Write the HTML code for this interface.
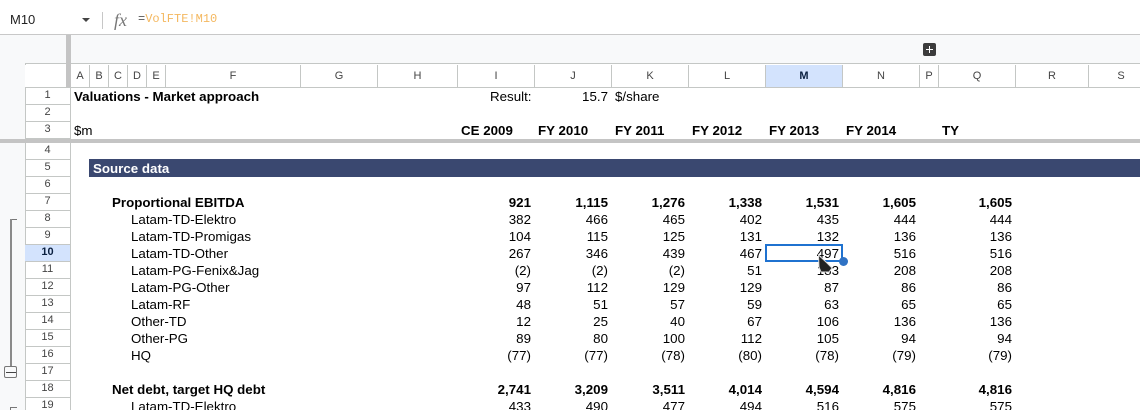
<!DOCTYPE html>
<html><head><meta charset="utf-8">
<style>
html,body{margin:0;padding:0;background:#fff}
#p{position:relative;width:1140px;height:410px;overflow:hidden;background:#fff;font-family:"Liberation Sans",sans-serif;font-size:13.33px;color:#000}
#p div{position:absolute;white-space:nowrap}
.ch{top:65px;height:22px;line-height:22px;text-align:center;font-size:11px;color:#444;border-right:1px solid #c4c7c5;box-sizing:border-box}
.rh{left:25px;width:45px;height:17px;line-height:15px;text-align:center;font-size:11px;color:#444;border-bottom:1px solid #c4c7c5;box-sizing:border-box}
.t{height:17px;line-height:17px}
.b{font-weight:bold}
.r{text-align:right;width:70px}
</style></head><body><div id="p">
<div style="left:0;top:0;width:1140px;height:34px;background:#fff"></div>
<div style="left:10px;top:11px;font-size:13px;line-height:17px;color:#222">M10</div>
<div style="left:82px;top:18px;width:0;height:0;border-left:4.5px solid transparent;border-right:4.5px solid transparent;border-top:4.5px solid #444"></div>
<div style="left:102px;top:12px;width:1px;height:17px;background:#c7c7c7"></div>
<div style="left:114px;top:10px;font-family:'Liberation Serif',serif;font-style:italic;font-size:18px;line-height:20px;color:#777">fx</div>
<div style="left:138px;top:12px;font-family:'Liberation Mono',monospace;font-size:12px;line-height:15px;color:#555">=<span style="color:#f4b860">VolFTE!M10</span></div>
<div style="left:0;top:34px;width:1140px;height:1px;background:#c8c8c8"></div>
<div style="left:0;top:35px;width:1140px;height:29px;background:#f8f9fa"></div>
<div style="left:0;top:35px;width:25px;height:375px;background:#f8f9fa"></div>
<div style="left:25px;top:63px;width:1115px;height:1px;background:#c4c7c5"></div>
<div style="left:25px;top:64px;width:1px;height:346px;background:#c4c7c5"></div>
<div style="left:25px;top:65px;width:45px;height:22px;background:#fff"></div>
<div style="left:66px;top:35px;width:5px;height:52px;background:#c4c4c4"></div>
<div style="left:923px;top:43px;width:13px;height:13px;background:#3c3c3c;border-radius:2px"></div>
<div style="left:926px;top:49px;width:7px;height:1px;background:#fff"></div>
<div style="left:929px;top:46px;width:1px;height:7px;background:#fff"></div>

<div class="ch" style="left:71px;width:19px">A</div>
<div class="ch" style="left:90px;width:19px">B</div>
<div class="ch" style="left:109px;width:19px">C</div>
<div class="ch" style="left:128px;width:19px">D</div>
<div class="ch" style="left:147px;width:19px">E</div>
<div class="ch" style="left:166px;width:135px">F</div>
<div class="ch" style="left:301px;width:77px">G</div>
<div class="ch" style="left:378px;width:80px">H</div>
<div class="ch" style="left:458px;width:77px">I</div>
<div class="ch" style="left:535px;width:77px">J</div>
<div class="ch" style="left:612px;width:77px">K</div>
<div class="ch" style="left:689px;width:77px">L</div>
<div class="ch" style="left:766px;width:77px;background:#d3e3fd;font-weight:bold;color:#0b2040">M</div>
<div class="ch" style="left:843px;width:77px">N</div>
<div class="ch" style="left:920px;width:19px">P</div>
<div class="ch" style="left:939px;width:77px">Q</div>
<div class="ch" style="left:1016px;width:73px">R</div>
<div class="ch" style="left:1089px;width:51px;padding-left:13px;border-right:0">S</div>
<div style="left:25px;top:87px;width:1115px;height:1px;background:#c4c7c5"></div>
<div style="left:70px;top:88px;width:1px;height:322px;background:#c4c7c5"></div>

<div class="rh" style="top:88px">1</div>
<div class="rh" style="top:105px">2</div>
<div class="rh" style="top:122px;height:17px">3</div>
<div style="left:0;top:139px;width:1140px;height:4px;background:#c4c4c4"></div>
<div class="rh" style="top:143px">4</div>
<div class="rh" style="top:160px">5</div>
<div class="rh" style="top:177px">6</div>
<div class="rh" style="top:194px">7</div>
<div class="rh" style="top:211px">8</div>
<div class="rh" style="top:228px">9</div>
<div class="rh" style="top:245px;background:#d3e3fd;font-weight:bold;color:#0b2040">10</div>
<div class="rh" style="top:262px">11</div>
<div class="rh" style="top:279px">12</div>
<div class="rh" style="top:296px">13</div>
<div class="rh" style="top:313px">14</div>
<div class="rh" style="top:330px">15</div>
<div class="rh" style="top:347px">16</div>
<div class="rh" style="top:364px">17</div>
<div class="rh" style="top:381px">18</div>
<div class="rh" style="top:398px">19</div>

<div style="left:10px;top:219px;width:7px;height:1px;background:#777"></div>
<div style="left:10px;top:219px;width:2px;height:147px;background:#8a8a8a"></div>
<div style="left:4px;top:366px;width:11px;height:10px;border:1.5px solid #777;border-radius:2px;background:#f8f9fa"></div>
<div style="left:6px;top:372px;width:10px;height:1px;background:#444"></div>
<div style="left:10px;top:407px;width:7px;height:1px;background:#777"></div>
<div style="left:10px;top:407px;width:1px;height:3px;background:#777"></div>

<div class="t b" style="left:74px;top:88px">Valuations - Market approach</div>
<div class="t" style="left:490px;top:88px">Result:</div>
<div class="t" style="left:567px;top:88px;width:41px;text-align:right">15.7</div>
<div class="t" style="left:615px;top:88px">$/share</div>
<div class="t" style="left:74px;top:122px">$m</div>
<div class="t b" style="left:461px;top:122px">CE 2009</div>
<div class="t b" style="left:538px;top:122px">FY 2010</div>
<div class="t b" style="left:615px;top:122px">FY 2011</div>
<div class="t b" style="left:692px;top:122px">FY 2012</div>
<div class="t b" style="left:769px;top:122px">FY 2013</div>
<div class="t b" style="left:846px;top:122px">FY 2014</div>
<div class="t b" style="left:942px;top:122px">TY</div>

<div style="left:89px;top:159px;width:1051px;height:18px;background:#3a4870"></div>
<div class="t b" style="left:93px;top:160px;color:#fff">Source data</div>

<div class="t b" style="left:112px;top:194px">Proportional EBITDA</div>
<div class="t r b" style="left:461px;top:194px">921</div><div class="t r b" style="left:538px;top:194px">1,115</div><div class="t r b" style="left:615px;top:194px">1,276</div><div class="t r b" style="left:692px;top:194px">1,338</div><div class="t r b" style="left:769px;top:194px">1,531</div><div class="t r b" style="left:846px;top:194px">1,605</div><div class="t r b" style="left:942px;top:194px">1,605</div>

<div class="t" style="left:131px;top:211px">Latam-TD-Elektro</div>
<div class="t r" style="left:461px;top:211px">382</div><div class="t r" style="left:538px;top:211px">466</div><div class="t r" style="left:615px;top:211px">465</div><div class="t r" style="left:692px;top:211px">402</div><div class="t r" style="left:769px;top:211px">435</div><div class="t r" style="left:846px;top:211px">444</div><div class="t r" style="left:942px;top:211px">444</div>

<div class="t" style="left:131px;top:228px">Latam-TD-Promigas</div>
<div class="t r" style="left:461px;top:228px">104</div><div class="t r" style="left:538px;top:228px">115</div><div class="t r" style="left:615px;top:228px">125</div><div class="t r" style="left:692px;top:228px">131</div><div class="t r" style="left:769px;top:228px">132</div><div class="t r" style="left:846px;top:228px">136</div><div class="t r" style="left:942px;top:228px">136</div>

<div class="t" style="left:131px;top:245px">Latam-TD-Other</div>
<div class="t r" style="left:461px;top:245px">267</div><div class="t r" style="left:538px;top:245px">346</div><div class="t r" style="left:615px;top:245px">439</div><div class="t r" style="left:692px;top:245px">467</div><div class="t r" style="left:769px;top:245px">497</div><div class="t r" style="left:846px;top:245px">516</div><div class="t r" style="left:942px;top:245px">516</div>

<div class="t" style="left:131px;top:262px">Latam-PG-Fenix&amp;Jag</div>
<div class="t r" style="left:461px;top:262px">(2)</div><div class="t r" style="left:538px;top:262px">(2)</div><div class="t r" style="left:615px;top:262px">(2)</div><div class="t r" style="left:692px;top:262px">51</div><div class="t r" style="left:769px;top:262px">183</div><div class="t r" style="left:846px;top:262px">208</div><div class="t r" style="left:942px;top:262px">208</div>

<div class="t" style="left:131px;top:279px">Latam-PG-Other</div>
<div class="t r" style="left:461px;top:279px">97</div><div class="t r" style="left:538px;top:279px">112</div><div class="t r" style="left:615px;top:279px">129</div><div class="t r" style="left:692px;top:279px">129</div><div class="t r" style="left:769px;top:279px">87</div><div class="t r" style="left:846px;top:279px">86</div><div class="t r" style="left:942px;top:279px">86</div>

<div class="t" style="left:131px;top:296px">Latam-RF</div>
<div class="t r" style="left:461px;top:296px">48</div><div class="t r" style="left:538px;top:296px">51</div><div class="t r" style="left:615px;top:296px">57</div><div class="t r" style="left:692px;top:296px">59</div><div class="t r" style="left:769px;top:296px">63</div><div class="t r" style="left:846px;top:296px">65</div><div class="t r" style="left:942px;top:296px">65</div>

<div class="t" style="left:131px;top:313px">Other-TD</div>
<div class="t r" style="left:461px;top:313px">12</div><div class="t r" style="left:538px;top:313px">25</div><div class="t r" style="left:615px;top:313px">40</div><div class="t r" style="left:692px;top:313px">67</div><div class="t r" style="left:769px;top:313px">106</div><div class="t r" style="left:846px;top:313px">136</div><div class="t r" style="left:942px;top:313px">136</div>

<div class="t" style="left:131px;top:330px">Other-PG</div>
<div class="t r" style="left:461px;top:330px">89</div><div class="t r" style="left:538px;top:330px">80</div><div class="t r" style="left:615px;top:330px">100</div><div class="t r" style="left:692px;top:330px">112</div><div class="t r" style="left:769px;top:330px">105</div><div class="t r" style="left:846px;top:330px">94</div><div class="t r" style="left:942px;top:330px">94</div>

<div class="t" style="left:131px;top:347px">HQ</div>
<div class="t r" style="left:461px;top:347px">(77)</div><div class="t r" style="left:538px;top:347px">(77)</div><div class="t r" style="left:615px;top:347px">(78)</div><div class="t r" style="left:692px;top:347px">(80)</div><div class="t r" style="left:769px;top:347px">(78)</div><div class="t r" style="left:846px;top:347px">(79)</div><div class="t r" style="left:942px;top:347px">(79)</div>

<div class="t b" style="left:112px;top:381px">Net debt, target HQ debt</div>
<div class="t r b" style="left:461px;top:381px">2,741</div><div class="t r b" style="left:538px;top:381px">3,209</div><div class="t r b" style="left:615px;top:381px">3,511</div><div class="t r b" style="left:692px;top:381px">4,014</div><div class="t r b" style="left:769px;top:381px">4,594</div><div class="t r b" style="left:846px;top:381px">4,816</div><div class="t r b" style="left:942px;top:381px">4,816</div>

<div class="t" style="left:131px;top:398px">Latam-TD-Elektro</div>
<div class="t r" style="left:461px;top:398px">433</div><div class="t r" style="left:538px;top:398px">490</div><div class="t r" style="left:615px;top:398px">477</div><div class="t r" style="left:692px;top:398px">494</div><div class="t r" style="left:769px;top:398px">516</div><div class="t r" style="left:846px;top:398px">575</div><div class="t r" style="left:942px;top:398px">575</div>

<div style="left:765px;top:244px;width:78px;height:18px;box-sizing:border-box;border:2px solid #1f72d0"></div>
<div style="left:839px;top:257px;width:9px;height:9px;border-radius:50%;background:#2f72c4;border:0"></div>
<svg style="position:absolute;left:816px;top:253px" width="20" height="20" viewBox="0 0 20 20"><path d="M2.500 2 L3 14 L5 19 L13 19 L16 15 L10 9 Z" fill="#222" stroke="#ddd" stroke-width="1"/></svg>
</div></body></html>
